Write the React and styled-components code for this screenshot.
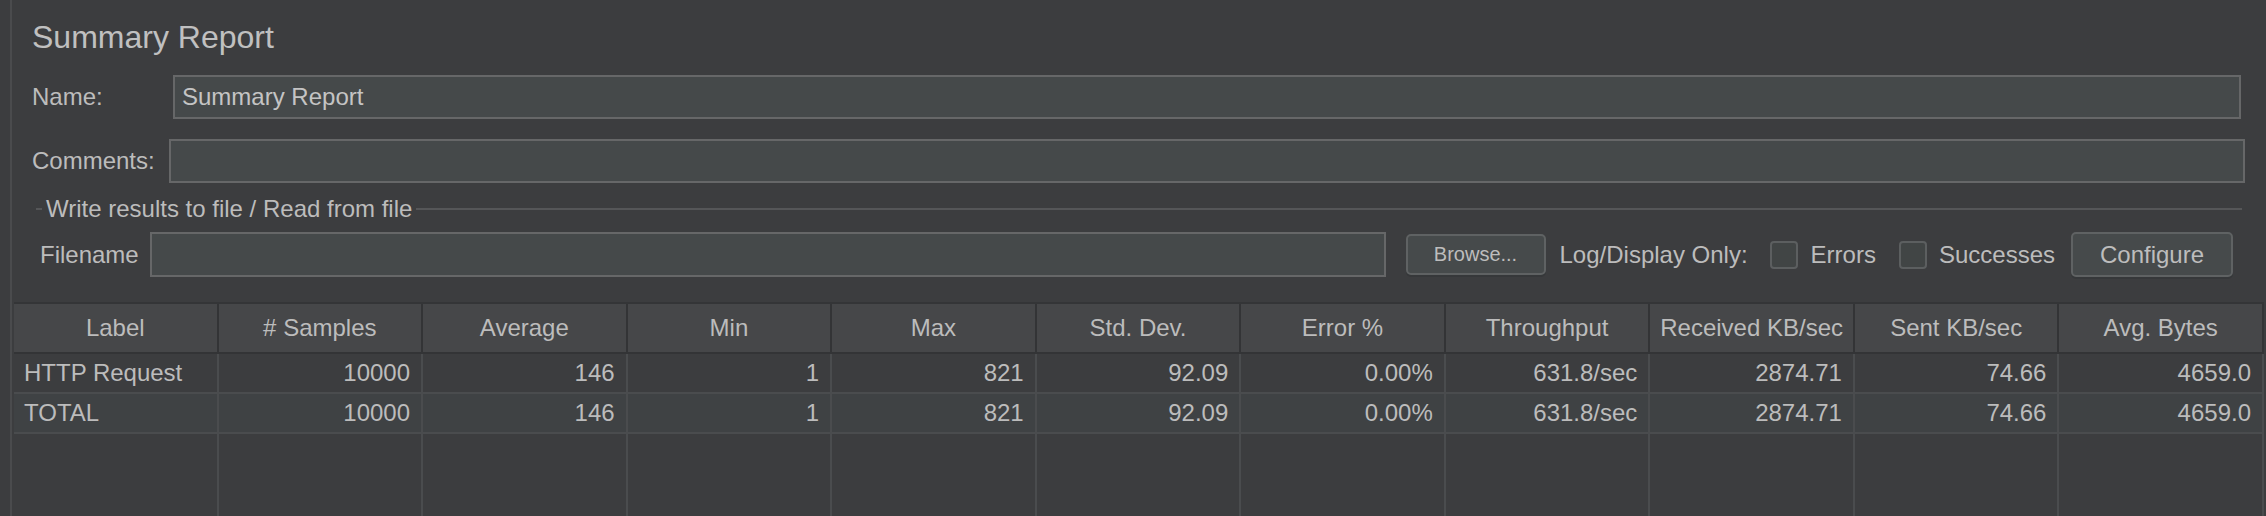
import React from "react";
import styled, { createGlobalStyle } from "styled-components";

const GlobalStyle = createGlobalStyle`
  html, body { margin: 0; padding: 0; background: #3c3d3f; }
  body { font-family: "Liberation Sans", Arial, sans-serif; color: #bbbbbb; }
  * { box-sizing: border-box; }
`;

const Root = styled.div`
  width: 2266px;
  height: 516px;
  overflow: hidden;
  background: #3c3d3f;
  display: flex;
`;

const Panel = styled.div`
  margin-left: 10px;
  border-left: 2px solid #4a4b4d;
  flex: 1;
  min-width: 0;
  display: flex;
  flex-direction: column;
`;

const Form = styled.div`
  padding-left: 20px;
  display: flex;
  flex-direction: column;
`;

const Title = styled.h1`
  margin: 19px 0 0;
  font-size: 32px;
  line-height: 36px;
  font-weight: 400;
  color: #c0c0c0;
`;

const FieldRow = styled.div`
  display: flex;
  align-items: center;
  margin-top: ${(p) => p.$top}px;
  margin-right: ${(p) => p.$right}px;
`;

const Label = styled.label`
  flex: none;
  width: ${(p) => p.$w}px;
  font-size: 24px;
  color: #bcbcbc;
  white-space: nowrap;
`;

const TextBox = styled.input`
  flex: 1;
  min-width: 0;
  height: ${(p) => p.$h}px;
  background: #45494a;
  border: 2px solid #666768;
  outline: none;
  font-family: "Liberation Sans", Arial, sans-serif;
  font-size: 24px;
  color: #c4c4c4;
  padding: 0 7px;
`;

const FileGroup = styled.div`
  margin: 14px 24px 0 4px;
  display: flex;
  flex-direction: column;
`;

const Legend = styled.div`
  display: flex;
  align-items: center;
  height: 24px;
  font-size: 24px;
  color: #bcbcbc;
  white-space: nowrap;
  &::before {
    content: "";
    width: 6px;
    height: 2px;
    margin-right: 4px;
    background: #555658;
  }
  &::after {
    content: "";
    flex: 1;
    height: 2px;
    margin-left: 4px;
    background: #555658;
  }
`;

const FileRow = styled.div`
  display: flex;
  align-items: center;
  margin-top: 11px;
  padding-left: 4px;
  padding-right: 9px;
  height: 45px;
`;

const Button = styled.button`
  flex: none;
  width: ${(p) => p.$w}px;
  height: ${(p) => p.$h}px;
  margin-left: ${(p) => p.$ml}px;
  background: #464a4b;
  border: 2px solid #5f6263;
  border-radius: 5px;
  box-shadow: 0 2px 0 #36383a;
  font-family: "Liberation Sans", Arial, sans-serif;
  font-size: ${(p) => p.$fs}px;
  color: #bdbdbd;
  padding: 0;
`;

const Text = styled.span`
  flex: none;
  margin-left: ${(p) => p.$ml}px;
  font-size: 24px;
  color: #bcbcbc;
  white-space: nowrap;
`;

const Check = styled.span`
  flex: none;
  width: 28px;
  height: 28px;
  margin-left: ${(p) => p.$ml}px;
  background: #414545;
  border: 2px solid #5c5f60;
  border-radius: 4px;
`;

const Table = styled.div`
  flex: 1;
  margin: 25px 2px 0 2px;
  display: flex;
  flex-direction: column;
`;

const Grid = styled.div`
  display: grid;
  grid-template-columns: repeat(11, 1fr);
`;

const HeaderRow = styled(Grid)`
  height: 52px;
  background: #464749;
  border-top: 2px solid #343537;
  border-bottom: 2px solid #333436;
`;

const HeaderCell = styled.div`
  border-right: 2px solid #333436;
  font-size: 24px;
  line-height: 48px;
  text-align: center;
  color: #bcbcbc;
  white-space: nowrap;
  overflow: hidden;
`;

const BodyRow = styled(Grid)`
  height: 40px;
  background: ${(p) => (p.$alt ? "#3f4244" : "#3c3d3f")};
  border-bottom: 2px solid #4a4c4e;
`;

const Cell = styled.div`
  border-right: 2px solid #4a4c4e;
  padding: 0 11px 0 10px;
  font-size: 24px;
  line-height: 38px;
  text-align: ${(p) => (p.$left ? "left" : "right")};
  color: #bcbcbc;
  white-space: nowrap;
  overflow: hidden;
`;

const Filler = styled(Grid)`
  flex: 1;
`;

const FillerCell = styled.div`
  border-right: 2px solid #4a4c4e;
`;

const columns = [
  "Label",
  "# Samples",
  "Average",
  "Min",
  "Max",
  "Std. Dev.",
  "Error %",
  "Throughput",
  "Received KB/sec",
  "Sent KB/sec",
  "Avg. Bytes",
];

const rows = [
  ["HTTP Request", "10000", "146", "1", "821", "92.09", "0.00%", "631.8/sec", "2874.71", "74.66", "4659.0"],
  ["TOTAL", "10000", "146", "1", "821", "92.09", "0.00%", "631.8/sec", "2874.71", "74.66", "4659.0"],
];

export default function App() {
  return (
    <>
      <GlobalStyle />
      <Root>
        <Panel>
          <Form>
            <Title>Summary Report</Title>
            <FieldRow $top={20} $right={25}>
              <Label $w={141}>Name:</Label>
              <TextBox $h={44} defaultValue="Summary Report" readOnly />
            </FieldRow>
            <FieldRow $top={20} $right={21}>
              <Label $w={137}>Comments:</Label>
              <TextBox $h={44} defaultValue="" readOnly />
            </FieldRow>
            <FileGroup>
              <Legend>Write results to file / Read from file</Legend>
              <FileRow>
                <Label $w={110}>Filename</Label>
                <TextBox $h={45} defaultValue="" readOnly />
                <Button $w={140} $h={41} $ml={20} $fs={20}>
                  Browse...
                </Button>
                <Text $ml={14}>Log/Display Only:</Text>
                <Check $ml={22} />
                <Text $ml={13}>Errors</Text>
                <Check $ml={23} />
                <Text $ml={12}>Successes</Text>
                <Button $w={162} $h={45} $ml={16} $fs={24}>
                  Configure
                </Button>
              </FileRow>
            </FileGroup>
          </Form>
          <Table>
            <HeaderRow>
              {columns.map((c) => (
                <HeaderCell key={c}>{c}</HeaderCell>
              ))}
            </HeaderRow>
            {rows.map((r, i) => (
              <BodyRow key={i} $alt={i === 1}>
                {r.map((v, j) => (
                  <Cell key={j} $left={j === 0}>
                    {v}
                  </Cell>
                ))}
              </BodyRow>
            ))}
            <Filler>
              {columns.map((c) => (
                <FillerCell key={c} />
              ))}
            </Filler>
          </Table>
        </Panel>
      </Root>
    </>
  );
}
